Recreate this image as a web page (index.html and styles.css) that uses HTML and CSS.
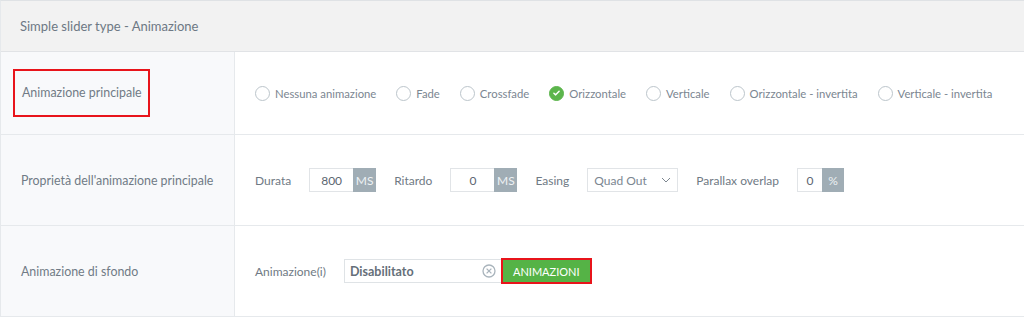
FILE: index.html
```html
<!DOCTYPE html>
<html lang="it">
<head>
  <meta charset="UTF-8">
  <title>Simple slider type - Animazione</title>
  <link rel="stylesheet" href="styles.css">
</head>
<body>

  <div class="pannello">
    <div class="intestazione">Simple slider type - Animazione</div>

    <div class="riga">
      <div class="etichetta"><span class="evidenziato">Animazione principale</span></div>
      <div class="contenuto">
        <label class="radio"><span class="cerchio"></span>Nessuna animazione</label>
        <label class="radio"><span class="cerchio"></span>Fade</label>
        <label class="radio"><span class="cerchio"></span>Crossfade</label>
        <label class="radio attivo">
          <span class="cerchio">
            <svg width="16" height="16" viewBox="0 0 16 16"><path d="M4.8 8.2 L7 10.3 L11.2 5.9" fill="none" stroke="#fff" stroke-width="1.8" stroke-linecap="round" stroke-linejoin="round"/></svg>
          </span>Orizzontale</label>
        <label class="radio"><span class="cerchio"></span>Verticale</label>
        <label class="radio"><span class="cerchio"></span>Orizzontale - invertita</label>
        <label class="radio"><span class="cerchio"></span>Verticale - invertita</label>
      </div>
    </div>

    <div class="riga">
      <div class="etichetta">Proprietà dell'animazione principale</div>
      <div class="contenuto">
        <span class="campo-nome">Durata</span>
        <span class="gruppo"><span class="valore largo">800</span><span class="unita">MS</span></span>
        <span class="campo-nome">Ritardo</span>
        <span class="gruppo"><span class="valore largo">0</span><span class="unita">MS</span></span>
        <span class="campo-nome">Easing</span>
        <span class="selezione">Quad Out
          <svg width="10" height="6" viewBox="0 0 10 6"><path d="M1 1 L5 5 L9 1" fill="none" stroke="#7d8790" stroke-width="1"/></svg>
        </span>
        <span class="campo-nome">Parallax overlap</span>
        <span class="gruppo"><span class="valore stretto">0</span><span class="unita piccola">%</span></span>
      </div>
    </div>

    <div class="riga">
      <div class="etichetta">Animazione di sfondo</div>
      <div class="contenuto">
        <span class="campo-nome">Animazione(i)</span>
        <span class="ricerca">Disabilitato
          <svg width="14" height="14" viewBox="0 0 14 14"><circle cx="7" cy="7" r="6" fill="none" stroke="#a9b4bc" stroke-width="1.3"/><path d="M4.6 4.6 L9.4 9.4 M9.4 4.6 L4.6 9.4" stroke="#a9b4bc" stroke-width="1.3"/></svg>
        </span>
        <span class="bottone-cornice"><button class="bottone">ANIMAZIONI</button></span>
      </div>
    </div>
  </div>

</body>
</html>
```

FILE: styles.css
```css
body {
  margin: 0;
  font-family: Lato, 'Open Sans', sans-serif;
  background-color: #ffffff;
  color: #6d7884;
}

.pannello {
  width: 1024px;
  border-top: 1px solid #dfe2e5;
  border-left: 1px solid #e6e9ec;
  box-sizing: border-box;
}

.intestazione {
  height: 50px;
  line-height: 50px;
  padding-left: 19px;
  background-color: #f2f2f2;
  border-bottom: 1px solid #e1e3e6;
  font-size: 13px;
  color: #6d7884;
}

.riga {
  display: grid;
  grid-template-columns: 234px 1fr;
  height: 82px;
  border-bottom: 1px solid #e6e9ec;
}

.riga + .riga {
  height: 90px;
}

.etichetta {
  display: flex;
  align-items: center;
  padding-left: 20px;
  background-color: #f8f9fb;
  border-right: 1px solid #e6e9ec;
  font-size: 12.4px;
  color: #707b86;
}

.evidenziato {
  margin-left: -8px;
  padding: 14px 6px 15px 7px;
  border: 2px solid #e8141b;
}

.contenuto {
  display: flex;
  align-items: center;
  padding-left: 20px;
  font-size: 12px;
  white-space: nowrap;
}

.radio {
  display: flex;
  align-items: center;
  flex-shrink: 0;
  margin-right: 20px;
  font-size: 11.3px;
  color: #7b8691;
}

.cerchio {
  width: 13px;
  height: 13px;
  border: 1.5px solid #bcc5cb;
  border-radius: 50%;
  margin-right: 5px;
  display: flex;
  align-items: center;
  justify-content: center;
}

.attivo .cerchio {
  border-color: #5cb54c;
  background-color: #5cb54c;
}

.campo-nome {
  color: #6f7a84;
  margin-right: 18px;
}

.gruppo {
  display: flex;
  height: 24px;
  margin-right: 18px;
}

.valore {
  border: 1px solid #e1e4e7;
  border-right: none;
  box-sizing: border-box;
  display: flex;
  align-items: center;
  justify-content: center;
  color: #5b6670;
}

.largo {
  width: 44px;
}

.stretto {
  width: 25px;
}

.unita {
  width: 23px;
  background-color: #a0adb5;
  color: #eef2f4;
  display: flex;
  align-items: center;
  justify-content: center;
}

.piccola {
  width: 22px;
}

.selezione {
  width: 91px;
  height: 24px;
  box-sizing: border-box;
  border: 1px solid #e1e4e7;
  display: flex;
  align-items: center;
  justify-content: space-between;
  padding: 0 6px 0 6px;
  margin-right: 18px;
  color: #7b8691;
}

.ricerca {
  width: 157px;
  height: 24px;
  box-sizing: border-box;
  border: 1px solid #dfe3e6;
  border-right: none;
  display: flex;
  align-items: center;
  justify-content: space-between;
  padding: 0 5px 0 5px;
  font-weight: bold;
  font-size: 12.5px;
  color: #656f79;
}

.bottone-cornice {
  border: 2px solid #e8141b;
  display: flex;
}

.bottone {
  height: 22px;
  padding: 0 10px;
  border: none;
  background-color: #55b346;
  color: #ffffff;
  font-family: Lato, sans-serif;
  font-size: 11px;
}
```
